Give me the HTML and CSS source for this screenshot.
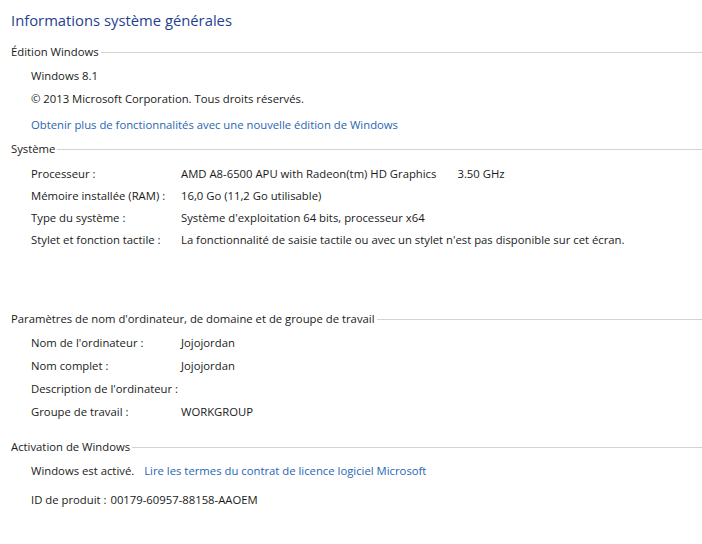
FILE: index.html
```html
<!DOCTYPE html>
<html>
<head>
    <meta charset="UTF-8">
    <title>Système</title>
    <link rel="stylesheet" href="styles.css">
</head>
<body>
    <h1 class="title">Informations système générales</h1>

    <div class="section sec-edition">
        <div class="sec-head"><span>Édition Windows</span><i class="rule"></i></div>
        <div class="rows">
            <div class="row">Windows 8.1</div>
            <div class="row">© 2013 Microsoft Corporation. Tous droits réservés.</div>
            <div class="row row-link"><a href="#">Obtenir plus de fonctionnalités avec une nouvelle édition de Windows</a></div>
        </div>
    </div>

    <div class="section sec-systeme">
        <div class="sec-head"><span>Système</span><i class="rule"></i></div>
        <div class="rows tight">
            <div class="row pair"><span class="lbl">Processeur :</span><span class="val">AMD A8-6500 APU with Radeon(tm) HD Graphics<span class="freq">3.50 GHz</span></span></div>
            <div class="row pair"><span class="lbl">Mémoire installée (RAM) :</span><span class="val">16,0 Go (11,2 Go utilisable)</span></div>
            <div class="row pair"><span class="lbl">Type du système :</span><span class="val">Système d'exploitation 64 bits, processeur x64</span></div>
            <div class="row pair"><span class="lbl">Stylet et fonction tactile :</span><span class="val">La fonctionnalité de saisie tactile ou avec un stylet n'est pas disponible sur cet écran.</span></div>
        </div>
    </div>

    <div class="section sec-nom">
        <div class="sec-head"><span>Paramètres de nom d'ordinateur, de domaine et de groupe de travail</span><i class="rule"></i></div>
        <div class="rows">
            <div class="row pair"><span class="lbl">Nom de l'ordinateur :</span><span class="val">Jojojordan</span></div>
            <div class="row pair"><span class="lbl">Nom complet :</span><span class="val">Jojojordan</span></div>
            <div class="row pair"><span class="lbl">Description de l'ordinateur :</span><span class="val"></span></div>
            <div class="row pair"><span class="lbl">Groupe de travail :</span><span class="val">WORKGROUP</span></div>
        </div>
    </div>

    <div class="section sec-activation">
        <div class="sec-head"><span>Activation de Windows</span><i class="rule"></i></div>
        <div class="rows">
            <div class="row">Windows est activé.<a class="gap" href="#">Lire les termes du contrat de licence logiciel Microsoft</a></div>
            <div class="row row-id">ID de produit :<span class="gap-s">00179-60957-88158-AAOEM</span></div>
        </div>
    </div>
</body>
</html>
```

FILE: styles.css
```css
/* base */
body{
    margin: 0;
    background: #fff;
    color: #1a1a1a;
    font-family: "Open Sans", "Noto Sans", sans-serif;
    font-size: 11.3px;
}

a{
    color: #1f66b3;
    text-decoration: none;
}

/* titre */
.title{
    margin: 0 0 0 11px;
    padding-top: 9px;
    height: 22px;
    line-height: 22px;
    font-size: 14.8px;
    font-weight: normal;
    color: #1f3f8f;
}

/* sections */
.section{
    padding-left: 11px;
}
.sec-edition{ margin-top: 10px; }
.sec-systeme{ margin-top: 2px; }
.sec-nom{ margin-top: 57px; }
.sec-activation{ margin-top: 13px; }

.sec-head{
    display: flex;
    align-items: center;
    height: 22px;
    line-height: 22px;
}
.sec-head .rule{
    flex: 1;
    height: 0;
    margin-left: 2px;
    border-top: 1px solid #d3d3d3;
}

.rows{
    padding: 1px 0 0 20px;
}
.row{
    height: 23px;
    line-height: 23px;
    white-space: nowrap;
}
.tight{
    padding-top: 3px;
}
.tight .row{
    height: 22px;
    line-height: 22px;
}
.row-link{ margin-top: 3px; }
.row-id{ margin-top: 6px; }

.pair{
    display: grid;
    grid-template-columns: 150px auto;
}
.freq{ margin-left: 21px; }
.gap{ margin-left: 10px; }
.gap-s{ margin-left: 4px; }
```
